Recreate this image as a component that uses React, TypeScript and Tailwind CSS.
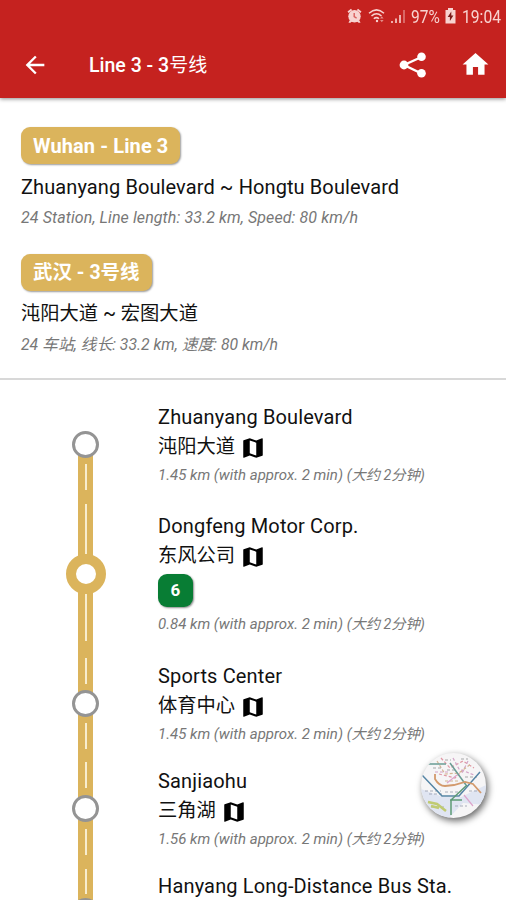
import { MdArrowBack, MdHome, MdMap } from "react-icons/md";

type Dash = { top: number; height: number };

type Station = {
  name: string;
  zh?: string;
  distance?: string;
  distanceZh?: string;
  transfer?: string;
  height: number;
  pad: number;
  dashes: Dash[];
};

const stations: Station[] = [
  {
    name: "Zhuanyang Boulevard",
    zh: "沌阳大道",
    distance: "1.45 km (with approx. 2 min)",
    distanceZh: "(大约 2分钟)",
    height: 106,
    pad: 11,
    dashes: [{ top: 73, height: 26 }],
  },
  {
    name: "Dongfeng Motor Corp.",
    zh: "东风公司",
    distance: "0.84 km (with approx. 2 min)",
    distanceZh: "(大约 2分钟)",
    transfer: "6",
    height: 153,
    pad: 14,
    dashes: [{ top: 7, height: 51 }, { top: 96, height: 48 }],
  },
  {
    name: "Sports Center",
    zh: "体育中心",
    distance: "1.45 km (with approx. 2 min)",
    distanceZh: "(大约 2分钟)",
    height: 106,
    pad: 11,
    dashes: [{ top: 8, height: 26 }, { top: 73, height: 26 }],
  },
  {
    name: "Sanjiaohu",
    zh: "三角湖",
    distance: "1.56 km (with approx. 2 min)",
    distanceZh: "(大约 2分钟)",
    height: 105,
    pad: 10,
    dashes: [{ top: 6, height: 26 }, { top: 73, height: 26 }],
  },
  {
    name: "Hanyang Long-Distance Bus Sta.",
    height: 101,
    pad: 10,
    dashes: [{ top: 8, height: 25 }],
  },
];

function StatusBar() {
  return (
    <div className="flex h-8 items-center justify-end pr-[5px] text-[#f8d3d0]">
      <svg className="mr-[6px] h-4 w-[15px]" viewBox="0 0 15 16" fill="currentColor">
        <path d="M.5 3.6 4 .8l1.2 1.4-3.5 2.9ZM14.5 3.6 11 .8 9.8 2.2l3.5 2.9Z" />
        <path d="M2.5 12.5h10l1 2.3h-2l-1-1h-6l-1 1h-2Z" />
        <circle cx="7.5" cy="8.3" r="6.2" />
        <path d="M7.2 5v3.7l2.4 1.4" fill="none" stroke="#d9605c" strokeWidth="1.4" />
      </svg>
      <svg className="mr-[5px] h-4 w-[18px]" viewBox="0 0 18 16" fill="none" stroke="currentColor" strokeWidth="1.5">
        <path d="M1 5.2Q8.5-1.5 16 5.2M3.5 8Q8.5 3.5 13.5 8M5.8 10.8Q8.5 8.5 11 10.8" />
        <circle cx="9" cy="13" r="1.2" fill="currentColor" stroke="none" />
        <path d="M12 10.5h3.600l-1.800-2.200ZM12 12h3.600l-1.800 2.200Z" fill="currentColor" stroke="none" opacity=".6" />
      </svg>
      <svg className="mr-[5px] h-4 w-[15px]" viewBox="0 0 15 16" fill="currentColor">
        <path d="M0 13h2v2H0zM4 10.5h2V15H4zM8 7h2v8H8z" opacity=".8" />
        <path d="M12 2h2v13h-2z" opacity=".4" />
      </svg>
      <span className="mr-[5px] w-[29px] origin-left scale-x-[.86] text-[18px] whitespace-nowrap">97%</span>
      <svg className="mr-[6px] h-4 w-[11px]" viewBox="0 0 11 16">
        <path d="M3 0h5v2h2.5v13.5H.5V2H3Z" fill="currentColor" />
        <path d="M6.3 3.5 2.7 9h2.2v4l3.5-5.5H6.3Z" fill="#7b1c1a" />
      </svg>
      <span className="w-[39px] origin-left scale-x-[.87] text-[18px]">19:04</span>
    </div>
  );
}

function ShareIcon() {
  return (
    <svg className="ml-auto h-[26px] w-7" viewBox="0 0 28 26" fill="currentColor">
      <path d="M22.5 5 5 13l17.5 8.5" fill="none" stroke="currentColor" strokeWidth="2.4" />
      <circle cx="5" cy="13" r="4.4" />
      <circle cx="22.5" cy="4.7" r="4.3" />
      <circle cx="22.5" cy="21.3" r="4.3" />
    </svg>
  );
}

function Header() {
  return (
    <header className="relative h-[98px] bg-[#c5221f] text-white shadow-[0_1px_4px_rgba(0,0,0,0.45)]">
      <StatusBar />
      <div className="flex h-[65px] items-center pr-[15px] pl-[21px]">
        <MdArrowBack className="size-7" />
        <h1 className="mt-[3px] ml-10 text-[19.5px] font-medium">
          Line 3 - 3<span className="text-[19px] font-normal">号线</span>
        </h1>
        <ShareIcon />
        <MdHome className="ml-[33px] size-[31px]" />
      </div>
    </header>
  );
}

function LineSummary({ badge, route, info, zh }: { badge: string; route: string; info: string; zh?: boolean }) {
  return (
    <div className="flex h-[127px] flex-col items-start">
      <div
        className={`flex h-[37px] items-center rounded-[9px] bg-[#dbb45c] px-3 font-bold text-white shadow-[1px_1px_2px_rgba(0,0,0,0.4)] ${zh ? "text-[19.5px]" : "text-[20px] tracking-[0.1px]"}`}
      >
        {badge}
      </div>
      <div
        className={`mt-[9px] leading-7 whitespace-nowrap text-[#111] ${zh ? "text-[19.3px]" : "text-[20px] tracking-[0.1px]"}`}
      >
        {route}
      </div>
      <div
        className={`mt-[7px] leading-5 whitespace-nowrap text-[#777] italic ${zh ? "text-[15.8px]" : "text-[16px] tracking-[0.1px]"}`}
      >
        {info}
      </div>
    </div>
  );
}

function Rail({ station, first }: { station: Station; first: boolean }) {
  return (
    <div className="relative flex w-[41px] shrink-0 items-center justify-center">
      <div className={`absolute bottom-0 left-[13px] w-[15px] bg-[#dbb45c] ${first ? "top-1/2" : "top-0"}`} />
      {station.dashes.map((d) => (
        <div
          key={d.top}
          className="absolute left-5 w-[1.5px] bg-[#f8edce]"
          style={{ top: d.top, height: d.height }}
        />
      ))}
      {station.transfer ? (
        <div className="relative size-10 rounded-full border-[10px] border-[#dbb45c] bg-white" />
      ) : (
        <div className="relative size-[27px] rounded-full border-[3px] border-[#949494] bg-white" />
      )}
    </div>
  );
}

function StationRow({ station, first }: { station: Station; first: boolean }) {
  return (
    <div className="flex pl-[65px]" style={{ height: station.height }}>
      <Rail station={station} first={first} />
      <div className="ml-[52px] whitespace-nowrap" style={{ paddingTop: station.pad }}>
        <div className="text-[20px] leading-[30px] tracking-[0.15px] text-[#111]">{station.name}</div>
        {station.zh && (
          <div className="flex h-[30px] items-center text-[19.3px] text-[#111]">
            {station.zh}
            <MdMap className="mt-[2px] ml-[5px] size-[26px] text-black" />
          </div>
        )}
        {station.transfer && (
          <div className="mt-[3px] mb-1 flex h-[33px] w-[35px] items-center justify-center rounded-[9px] bg-[#087d34] text-[17px] font-bold text-white shadow-[1px_1px_2px_rgba(0,0,0,0.45)]">
            {station.transfer}
          </div>
        )}
        {station.distance && (
          <div className="text-[15px] leading-[26px] text-[#777] italic">
            {station.distance} <span className="text-[14.3px]">{station.distanceZh}</span>
          </div>
        )}
      </div>
    </div>
  );
}

function MapButton() {
  return (
    <button className="absolute top-[753px] left-[421px] size-[65px] overflow-hidden rounded-full bg-[#f6f5f6] shadow-[2px_3px_7px_rgba(0,0,0,0.6)]">
      <svg className="blur-[0.4px]" viewBox="0 0 65 65" fill="none" strokeWidth="1.2">
        <path d="M0 36 22 44 40 44 65 32V52L42 50 28 65 0 60Z" fill="#e0e5f2" />
        <g strokeDasharray="3 2" opacity=".75">
          <path d="M20 5 29 15 42 8 53 15M18 21 34 25 44 15" stroke="#d9798a" />
          <path d="M14 19H27M32 5 38 16 53 22M47 8 41 20" stroke="#c78ab8" />
          <path d="M16 8 24 21 38 20 50 11M24 28H38" stroke="#c9a072" />
          <path d="M4 38 20 38M8 41H22M24 39H42M48 38H58M34 53H46M10 54H24" stroke="#8f95a8" />
          <path d="M12 15H20M26 17H36M44 24H56M24 7H30M40 6H47" stroke="#8d8d92" />
        </g>
        <path d="M1 22 21 43H38L59 19" stroke="#5585a5" strokeWidth="1.5" />
        <path d="M7 11H25M29 10 45 32" stroke="#6a9c94" strokeWidth="1.5" />
        <path d="M14 21V26Q18 33 24 33L33 32 44 29 52 31 60 40" stroke="#d39a6c" strokeWidth="1.8" />
        <path d="M46 32 30 47V62M29 47H41" stroke="#5d9a76" strokeWidth="1.5" />
        <path d="M7 49 16 51 25 58M10 53 18 55" stroke="#c0cb72" strokeWidth="2.5" />
        <path d="M43 42 52 53M26 30 36 22" stroke="#dba5cb" />
      </svg>
    </button>
  );
}

export default function App() {
  return (
    <div className="relative h-[900px] w-[506px] overflow-hidden bg-white font-[Roboto,'Noto_Sans_CJK_SC',sans-serif]">
      <Header />
      <section className="h-[282px] border-b-2 border-[#d8d8d8] pt-[29px] pl-[21px]">
        <LineSummary
          badge="Wuhan - Line 3"
          route="Zhuanyang Boulevard ~ Hongtu Boulevard"
          info="24 Station, Line length: 33.2 km, Speed: 80 km/h"
        />
        <LineSummary
          zh
          badge="武汉 - 3号线"
          route="沌阳大道 ~ 宏图大道"
          info="24 车站, 线长: 33.2 km, 速度: 80 km/h"
        />
      </section>
      <section className="pt-[11px]">
        {stations.map((station, i) => (
          <StationRow key={station.name} station={station} first={i === 0} />
        ))}
      </section>
      <MapButton />
    </div>
  );
}
